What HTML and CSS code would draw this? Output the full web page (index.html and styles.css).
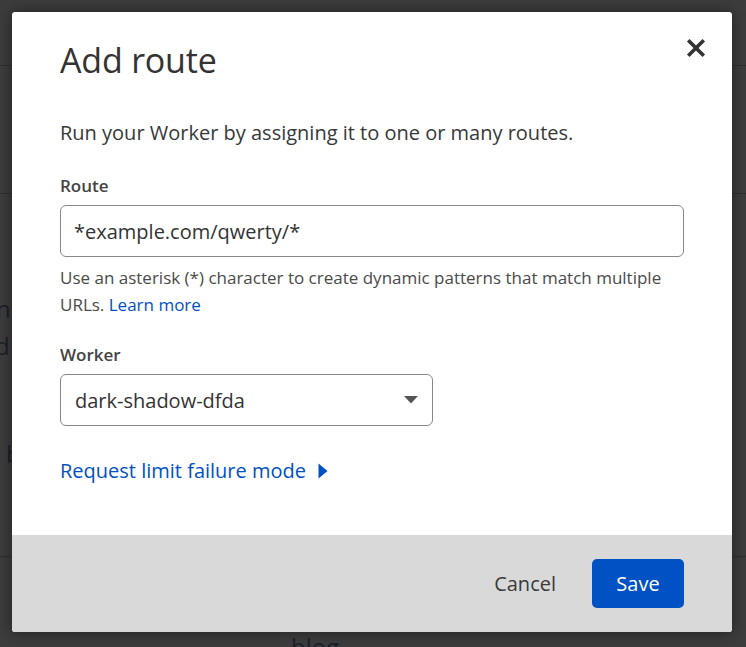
FILE: index.html
```html
<!DOCTYPE html>
<html lang="en">
<head>
<meta charset="utf-8">
<title>Add route</title>
<link rel="stylesheet" href="styles.css">
</head>
<body>
<div class="page">
  <div class="page-row row-a"></div>
  <div class="page-row row-b"></div>
  <div class="page-text t-n">n</div>
  <div class="page-text t-d">d</div>
  <div class="page-text t-b">b</div>
  <div class="page-row row-c"></div>
  <div class="page-text t-blog">blog</div>
</div>
<div class="overlay">
  <div class="modal" role="dialog" aria-labelledby="modal-title">
    <div class="modal-body">
      <div class="modal-head">
        <h2 id="modal-title" class="modal-title">Add route</h2>
        <button class="close" aria-label="Close">
          <svg width="20" height="20" viewBox="0 0 20 20"><path d="M3.5 3.5L16.5 16.5M16.5 3.5L3.5 16.5" stroke="#333" stroke-width="3.6" stroke-linecap="square"/></svg>
        </button>
      </div>
      <p class="intro">Run your Worker by assigning it to one or many routes.</p>
      <label class="field-label" for="route">Route</label>
      <div class="input">*example.com/qwerty/*</div>
      <p class="help">Use an asterisk (*) character to create dynamic patterns that match multiple URLs. <a class="link" href="#">Learn more</a></p>
      <label class="field-label worker-label">Worker</label>
      <div class="select">
        <span>dark-shadow-dfda</span>
        <svg class="caret" width="14" height="8" viewBox="0 0 14 8"><path d="M0 0H14L7 7.5Z" fill="#555"/></svg>
      </div>
      <a class="toggle" href="#">Request limit failure mode
        <svg class="toggle-caret" width="10" height="16" viewBox="0 0 10 16"><path d="M0.5 0.5L9.5 8L0.5 15.5Z" fill="#0051c3"/></svg>
      </a>
    </div>
    <div class="modal-footer">
      <button class="btn-cancel">Cancel</button>
      <button class="btn-save">Save</button>
    </div>
  </div>
</div>
</body>
</html>
```

FILE: styles.css
```css
html, body {
  margin: 0;
  padding: 0;
}
body {
  width: 746px;
  height: 647px;
  overflow: hidden;
  background: #3c3c3c;
  font-family: "Open Sans", "Noto Sans", sans-serif;
  position: relative;
}
.page {
  height: 647px;
  overflow: hidden;
}
.page-row {
  height: 1px;
  background: #2e2e2e;
}
.row-a { margin-top: 65px; }
.row-b { margin-top: 127px; }
.page-text {
  color: #1c1f2c;
  font-size: 24px;
  line-height: 24px;
  height: 24px;
}
.t-n { margin-top: 103px; margin-left: -4px; }
.t-d { margin-top: 13px; margin-left: -5px; }
.t-b { margin-top: 84px; margin-left: 6px; }
.row-c { margin-top: 90px; }
.t-blog { margin-top: 78px; margin-left: 291px; }

.overlay {
  position: absolute;
  inset: 0;
  padding: 12px 14px 15px 12px;
}
.modal {
  width: 720px;
  height: 620px;
  background: #fff;
  border-radius: 3px;
  overflow: hidden;
  display: flex;
  flex-direction: column;
  box-shadow: 0 0 14px rgba(0,0,0,0.45);
}
.modal-body {
  flex: 1;
  padding: 26px 48px 0 48px;
}
.modal-head {
  display: flex;
  justify-content: space-between;
  align-items: flex-start;
}
.modal-title {
  margin: 0;
  font-size: 34px;
  font-weight: 400;
  color: #333;
  line-height: 44px;
  letter-spacing: -0.2px;
}
.close {
  border: 0;
  background: none;
  padding: 0;
  margin: 0 -22px 0 0;
  width: 20px;
  height: 20px;
  display: flex;
}
.intro {
  margin: 37px 0 0 0;
  font-size: 20px;
  line-height: 28px;
  color: #36393a;
}
.field-label {
  display: block;
  margin-top: 28px;
  font-size: 17px;
  font-weight: 600;
  line-height: 22px;
  color: #444;
}
.input {
  margin-top: 8px;
  height: 50px;
  border: 1px solid #888;
  border-radius: 6px;
  padding: 0 13px;
  display: flex;
  align-items: center;
  font-size: 20px;
  color: #333;
}
.help {
  margin: 7px 0 0 0;
  font-size: 17px;
  line-height: 27px;
  color: #4a4a4a;
}
.link {
  color: #0051c3;
  text-decoration: none;
}
.worker-label {
  margin-top: 26px;
}
.select {
  margin-top: 8px;
  width: 343px;
  height: 50px;
  border: 1px solid #888;
  border-radius: 6px;
  padding: 0 14px;
  display: flex;
  align-items: center;
  justify-content: space-between;
  font-size: 20px;
  color: #333;
}
.caret {
  margin-right: 0;
}
.toggle {
  display: inline-flex;
  align-items: center;
  gap: 12px;
  margin-top: 31px;
  font-size: 20px;
  line-height: 28px;
  color: #0051c3;
  text-decoration: none;
}
.modal-footer {
  height: 97px;
  background: #d9d9d9;
  display: flex;
  align-items: center;
  justify-content: flex-end;
  padding: 0 48px;
  gap: 36px;
}
.btn-cancel {
  border: 0;
  background: none;
  padding: 0;
  font-family: inherit;
  font-size: 20px;
  color: #3a3a3a;
}
.btn-save {
  border: 0;
  background: #0051c3;
  color: #fff;
  font-family: inherit;
  font-size: 20px;
  width: 92px;
  height: 49px;
  border-radius: 5px;
}
```
